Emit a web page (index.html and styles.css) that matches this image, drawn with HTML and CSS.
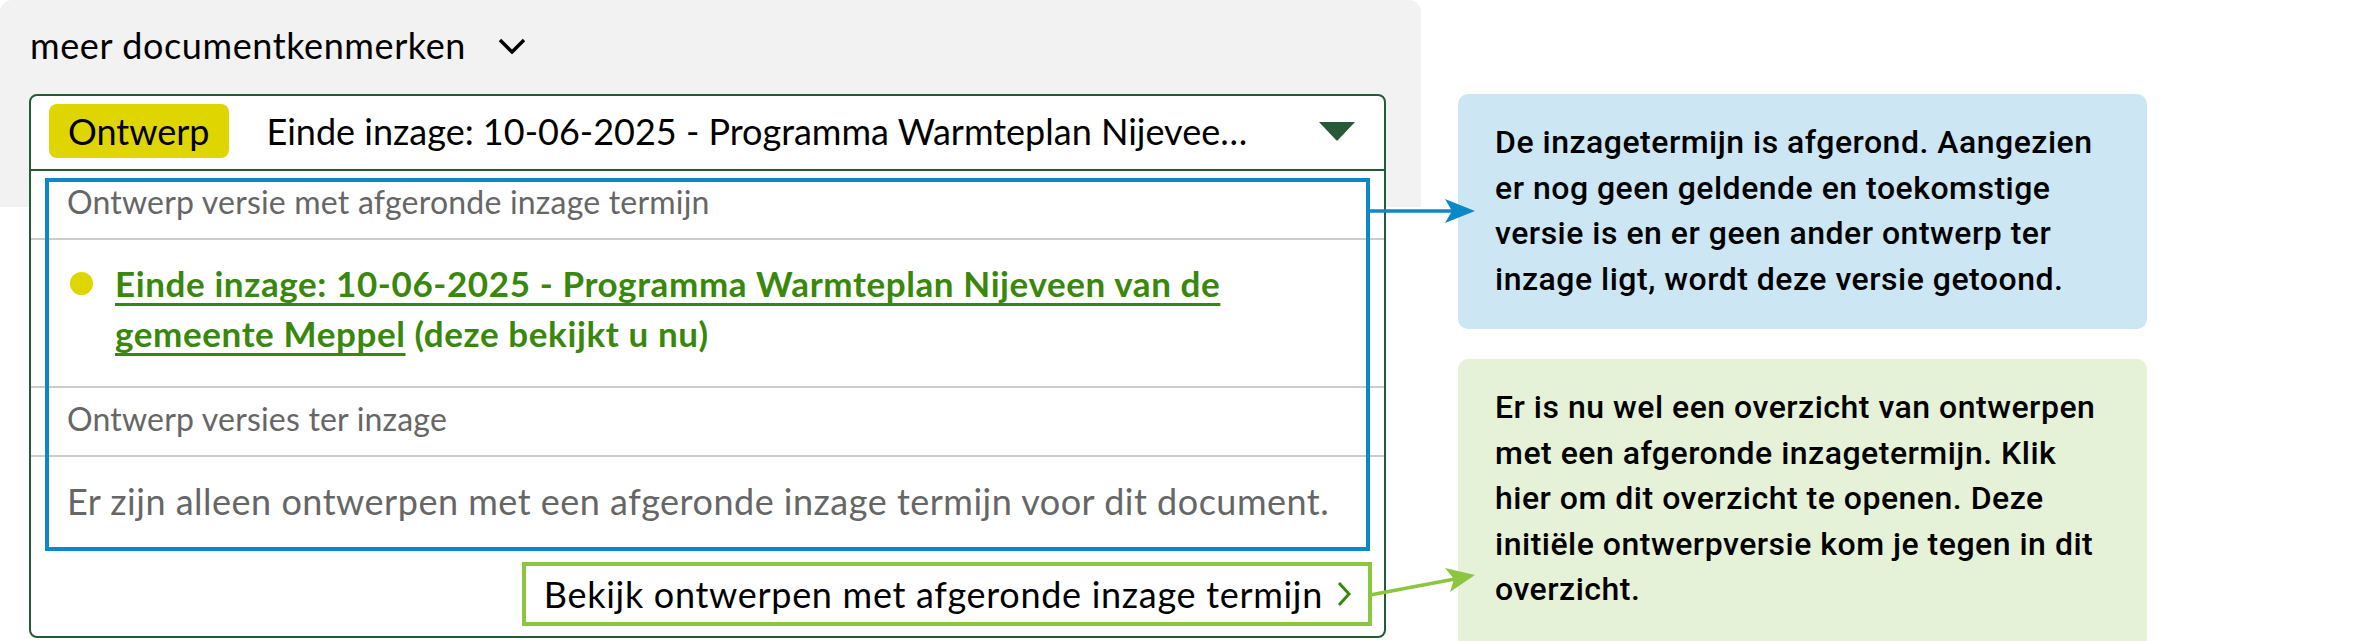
FILE: index.html
```html
<!DOCTYPE html>
<html lang="nl">
<head>
  <meta charset="UTF-8" />
  <meta name="viewport" content="width=device-width, initial-scale=1.0"/>
  <title>Versies - documentkenmerken</title>
  <link rel="stylesheet" href="styles.css">
</head>
<body>
<div class="page">
  <section class="panel">
    <button class="toggle" type="button">
      meer documentkenmerken
      <svg class="toggle-icon" width="28" height="16" viewBox="0 0 28 16"><path d="M2 2 L14 14 L26 2" fill="none" stroke="#000" stroke-width="3.5"/></svg>
    </button>

    <div class="select">
      <div class="select-head">
        <span class="badge">Ontwerp</span>
        <span class="select-title">Einde inzage: 10-06-2025 - Programma Warmteplan Nijeveen van de gemeente Meppel</span>
        <svg class="caret" width="36" height="19" viewBox="0 0 36 19"><path d="M0 0 H36 L19 18 Q18 19 17 18 Z" fill="#275937"/></svg>
      </div>

      <div class="select-body">
        <div class="group-title">Ontwerp versie met afgeronde inzage termijn</div>
        <div class="option">
          <span class="dot"></span>
          <p><a href="#">Einde inzage: 10-06-2025 - Programma Warmteplan Nijeveen van de gemeente Meppel</a> (deze bekijkt u nu)</p>
        </div>
        <div class="group-title">Ontwerp versies ter inzage</div>
        <p class="empty">Er zijn alleen ontwerpen met een afgeronde inzage termijn voor dit document.</p>
        <!-- annotatie -->
        <div class="mark-blue"></div>
      </div>

      <div class="select-foot">
        <a class="more" href="#">
          Bekijk ontwerpen met afgeronde inzage termijn
          <svg width="14" height="26" viewBox="0 0 14 26"><path d="M2 2 L12 13 L2 24" fill="none" stroke="#39870c" stroke-width="3"/></svg>
        </a>
      </div>
    </div>
  </section>

  <aside class="notes">
    <div class="note note-blue">De inzagetermijn is afgerond. Aangezien er nog geen geldende en toekomstige versie is en er geen ander ontwerp ter inzage ligt, wordt deze versie getoond.</div>
    <div class="note note-green">Er is nu wel een overzicht van ontwerpen met een afgeronde inzagetermijn. Klik hier om dit overzicht te openen. Deze initiële ontwerpversie kom je tegen in dit overzicht.</div>
  </aside>

  <!-- pijlen naar de notities -->
  <svg class="arrows" width="2368" height="641" viewBox="0 0 2368 641">
    <line x1="1370" y1="211" x2="1452" y2="211" stroke="#0a88c9" stroke-width="3.5"/>
    <polygon points="1445,199 1475,211 1445,223 1452,211" fill="#0a88c9"/>
    <line x1="1370" y1="595" x2="1455" y2="579" stroke="#8cc63f" stroke-width="3.5"/>
    <polygon points="1445,568 1475,575 1450,592 1454,579" fill="#8cc63f"/>
  </svg>
</div>
</body>
</html>
```

FILE: styles.css
```css
body {
  margin: 0;
  background: #fff;
  font-family: Lato, "Noto Sans", sans-serif;
  color: #000;
}

.page {
  position: relative;
  display: flex;
  align-items: flex-start;
  gap: 37px;
  width: 2368px;
  height: 641px;
  overflow: hidden;
}

/* grijze kenmerken-balk */
.panel {
  flex: none;
  width: 1421px;
  min-height: 641px;
  box-sizing: border-box;
  padding: 24px 0 0 29px;
  background: linear-gradient(#f2f2f2, #f2f2f2) top left / 100% 207px no-repeat;
  border-radius: 12px 12px 0 0;
}

.toggle {
  display: flex;
  align-items: center;
  gap: 32px;
  padding: 0 0 0 1px;
  border: 0;
  background: none;
  font-family: Lato, sans-serif;
  font-size: 36px;
  letter-spacing: 0.6px;
  line-height: 1.2;
  color: #000;
}

.select {
  margin-top: 27px;
  width: 1357px;
  box-sizing: border-box;
  border: 2px solid #275937;
  border-radius: 8px;
  background: #fff;
}

.select-head {
  display: flex;
  align-items: center;
  padding: 8px 29px 11px 18px;
  border-bottom: 2px solid #275937;
}

.badge {
  flex: none;
  padding: 5px 19px;
  background: #dfd500;
  border-radius: 8px;
  font-size: 36px;
  line-height: 44px;
}

.select-title {
  flex: 1;
  min-width: 0;
  margin: 0 54px 0 38px;
  font-size: 36px;
  line-height: 44px;
  white-space: nowrap;
  overflow: hidden;
  text-overflow: ellipsis;
}

.caret {
  flex: none;
}

.select-body {
  position: relative;
}

.group-title {
  padding: 11px 36px 16px;
  border-bottom: 2px solid #ccc;
  font-size: 32px;
  letter-spacing: 0.2px;
  line-height: 40px;
  color: #666;
}

.option {
  display: flex;
  gap: 22px;
  padding: 18px 40px 28px 39px;
  border-bottom: 2px solid #ccc;
}

.dot {
  flex: none;
  width: 23px;
  height: 23px;
  margin-top: 14px;
  border-radius: 50%;
  background: #dfd500;
}

.option p {
  margin: 0;
  font-size: 35px;
  font-weight: 700;
  letter-spacing: 0.6px;
  line-height: 50px;
  color: #39870c;
}

.option a {
  color: inherit;
  text-decoration: underline;
  text-decoration-thickness: 3px;
  text-underline-offset: 6px;
}

.empty {
  margin: 0;
  padding: 20px 36px;
  font-size: 36px;
  letter-spacing: 0.5px;
  line-height: 48px;
  color: #666;
}

.mark-blue {
  position: absolute;
  left: 14px;
  top: 7px;
  width: 1325px;
  height: 373px;
  box-sizing: border-box;
  border: 4px solid #0a88c9;
  pointer-events: none;
}

.select-foot {
  display: flex;
  justify-content: flex-end;
  padding: 17px 12px 10px;
}

.more {
  display: flex;
  align-items: center;
  gap: 14px;
  padding: 6px 17px 6px 18px;
  border: 4px solid #8cc63f;
  font-size: 36px;
  letter-spacing: 0.7px;
  line-height: 44px;
  color: #000;
  text-decoration: none;
}

/* notities rechts */
.notes {
  flex: none;
  width: 689px;
  display: flex;
  flex-direction: column;
  gap: 30px;
  padding-top: 94px;
}

.note {
  padding: 26px 37px 27px;
  border-radius: 10px;
  font-family: Roboto, sans-serif;
  font-size: 32px;
  font-weight: 500;
  letter-spacing: 0.5px;
  line-height: 45.5px;
  color: #000;
}

.note-blue {
  background: #cde6f3;
}

.note-green {
  background: #e5f2d8;
  min-height: 300px;
}

.arrows {
  position: absolute;
  left: 0;
  top: 0;
  z-index: 2;
  pointer-events: none;
}
```
